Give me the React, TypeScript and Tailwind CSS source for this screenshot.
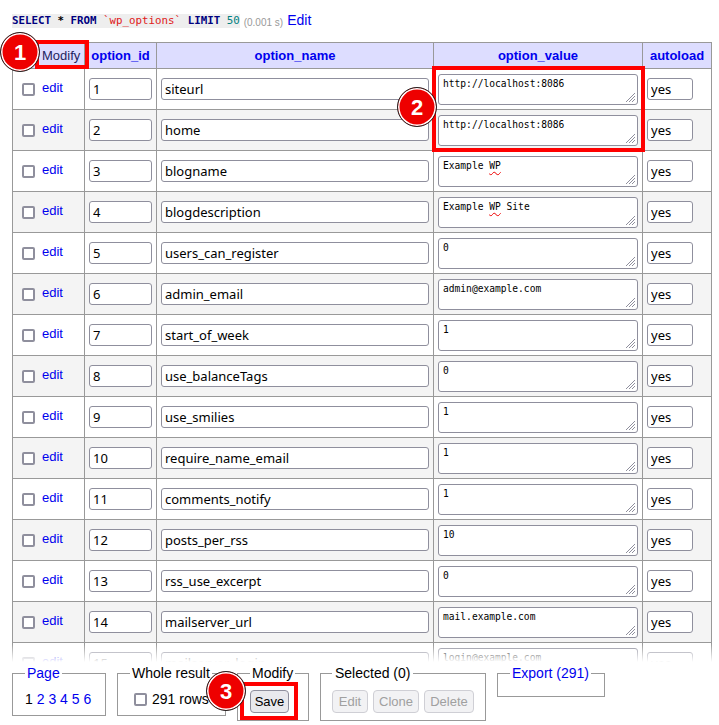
import React from "react";

type Row = { id: number; name: string; value: React.ReactNode };

const wavy = "underline decoration-wavy decoration-[#e00] decoration-1 underline-offset-[2px]";

const rows: Row[] = [
  { id: 1, name: "siteurl", value: "http://localhost:8086" },
  { id: 2, name: "home", value: "http://localhost:8086" },
  { id: 3, name: "blogname", value: <>Example <span className={wavy}>WP</span></> },
  { id: 4, name: "blogdescription", value: <>Example <span className={wavy}>WP</span> Site</> },
  { id: 5, name: "users_can_register", value: "0" },
  { id: 6, name: "admin_email", value: "admin@example.com" },
  { id: 7, name: "start_of_week", value: "1" },
  { id: 8, name: "use_balanceTags", value: "0" },
  { id: 9, name: "use_smilies", value: "1" },
  { id: 10, name: "require_name_email", value: "1" },
  { id: 11, name: "comments_notify", value: "1" },
  { id: 12, name: "posts_per_rss", value: "10" },
  { id: 13, name: "rss_use_excerpt", value: "0" },
  { id: 14, name: "mailserver_url", value: "mail.example.com" },
  { id: 15, name: "mailserver_login", value: "login@example.com" },
];

const cell = "border-r border-b border-[#999] h-[41px] flex items-center";
const field =
  "h-[22px] rounded-[3px] border border-[#8f8f9d] bg-white px-[3px] font-['Noto_Sans',sans-serif] text-[13px] text-black outline-none";

function Checkbox() {
  return <span className="block h-[13px] w-[13px] shrink-0 rounded-[2px] border-2 border-[#8f8f9d] bg-white" />;
}

function Grip() {
  return (
    <svg width="10" height="10" viewBox="0 0 10 10" className="absolute bottom-[2px] right-[2px]">
      <path d="M10 1L1 10M10 4L4 10M10 7L7 10" stroke="#8f8f9d" strokeWidth="1" />
    </svg>
  );
}

function Badge({ n, className }: { n: number; className: string }) {
  return (
    <div
      className={`absolute flex h-[40px] w-[40px] items-center justify-center rounded-full border border-[#222] bg-[#ee0000] text-[22px] font-bold text-white shadow-[inset_0_0_0_1.5px_#fff] ${className}`}
    >
      {n}
    </div>
  );
}

function Btn({ label, w, disabled }: { label: string; w: string; disabled?: boolean }) {
  return (
    <button
      className={`${w} h-[23px] rounded-[4px] border text-[13px] leading-none ${
        disabled ? "border-[#cfcfd5] bg-[#f2f2f4] text-[#a0a0a0]" : "border-[#8f8f9d] bg-[#e9e9ed] text-black"
      }`}
    >
      {label}
    </button>
  );
}

export default function App() {
  return (
    <div className="relative h-[725px] w-[719px] overflow-hidden bg-white font-['Liberation_Sans',Arial,sans-serif] text-[13px] text-black">
      {/* query line */}
      <div className="flex h-[42px] items-start gap-[4px] pl-[12px] pt-[12px]">
        <code className="mt-[2px] bg-[#eee] font-['DejaVu_Sans_Mono',monospace] text-[10.8px] leading-[14px] whitespace-pre">
          <b className="text-[#000080]">SELECT</b> <b>*</b> <b className="text-[#000080]">FROM</b>{" "}
          <span className="text-[#e02020]">`wp_options`</span> <b className="text-[#000080]">LIMIT</b>{" "}
          <span className="text-[#008080]">50</span>
        </code>
        <span className="mt-[5px] text-[10px] leading-[12px] text-[#999]">(0.001 s)</span>
        <a className="text-[14px] leading-[16px] text-[#00e]">Edit</a>
      </div>

      {/* table */}
      <div className="ml-[12px] grid w-[700px] grid-cols-[72px_72px_277px_209px_69px] border-l border-t border-[#999]">
        <div className="flex h-[26px] items-center gap-[7px] border-b border-r border-[#999] bg-[#ddf] pl-[9px]">
          <Checkbox />
          <a className="text-[#1f1f5f]">Modify</a>
        </div>
        {["option_id", "option_name", "option_value", "autoload"].map((h) => (
          <div
            key={h}
            className="flex h-[26px] items-center justify-center border-b border-r border-[#999] bg-[#ddf] font-bold text-[#00e]"
          >
            {h}
          </div>
        ))}

        {rows.map((r) => {
          const bg = r.id % 2 === 0 ? "bg-[#f4f4f4]" : "bg-white";
          return (
            <React.Fragment key={r.id}>
              <div className={`${cell} ${bg} gap-[7px] pl-[9px]`}>
                <Checkbox />
                <a className="-mt-[2px] text-[#00e]">edit</a>
              </div>
              <div className={`${cell} ${bg} pl-[4px]`}>
                <input readOnly defaultValue={r.id} className={`${field} w-[63px]`} />
              </div>
              <div className={`${cell} ${bg} pl-[4px]`}>
                <input readOnly defaultValue={r.name} className={`${field} w-[268px]`} />
              </div>
              <div className={`${cell} ${bg} pl-[4px]`}>
                <div className="relative h-[31px] w-[200px] rounded-[3px] border border-[#8f8f9d] bg-white px-[4px] pt-[3px] font-['DejaVu_Sans_Mono',monospace] text-[9.6px] leading-[12px] text-black">
                  {r.value}
                  <Grip />
                </div>
              </div>
              <div className={`${cell} ${bg} pl-[4px]`}>
                <input readOnly defaultValue="yes" className={`${field} w-[46px]`} />
              </div>
            </React.Fragment>
          );
        })}
      </div>

      {/* sticky footer */}
      <div className="absolute bottom-0 left-0 right-0 flex h-[83px] flex-col text-[14px]">
        <div className="h-[20px] bg-linear-to-b from-transparent from-10% to-white" />
        <div className="flex flex-1 items-start gap-[11px] bg-white pl-[12px] pt-[3px]">
          <fieldset className="w-[94px] border border-[#999] px-[12px] pb-[8px]">
            <legend className="px-[2px] leading-[16px] text-[#00e]">Page</legend>
            <div className="pt-[10px] leading-[16px]">
              1 <a className="text-[#00e]">2</a> <a className="text-[#00e]">3</a> <a className="text-[#00e]">4</a>{" "}
              <a className="text-[#00e]">5</a> <a className="text-[#00e]">6</a>
            </div>
          </fieldset>
          <fieldset className="w-[109px] border border-[#999] px-[12px] pb-[8px]">
            <legend className="px-[2px] leading-[16px]">Whole result</legend>
            <div className="flex items-center gap-[5px] whitespace-nowrap pl-[4px] pt-[10px] leading-[16px]">
              <Checkbox />
              291 rows
            </div>
          </fieldset>
          <fieldset className="w-[72px] border border-[#999] px-[12px] pb-[7px]">
            <legend className="px-[2px] leading-[16px]">Modify</legend>
            <div className="pt-[9px]">
              <Btn label="Save" w="w-[39px]" />
            </div>
          </fieldset>
          <fieldset className="w-[166px] border border-[#999] px-[11px] pb-[7px]">
            <legend className="px-[3px] leading-[16px]">Selected (0)</legend>
            <div className="flex gap-[5px] pt-[9px]">
              <Btn label="Edit" w="w-[36px]" disabled />
              <Btn label="Clone" w="w-[46px]" disabled />
              <Btn label="Delete" w="w-[50px]" disabled />
            </div>
          </fieldset>
          <fieldset className="w-[108px] border border-[#999] px-[12px] pb-[8px]">
            <legend className="px-[2px] leading-[16px] text-[#00e]">Export (291)</legend>
            <div className="h-[7px]" />
          </fieldset>
        </div>
      </div>

      {/* annotations */}
      <div className="absolute left-[35px] top-[40px] h-[29px] w-[54px] border-4 border-[#f00]" />
      <div className="absolute left-[432px] top-[66px] h-[86px] w-[213px] border-4 border-[#f00]" />
      <div className="absolute left-[240px] top-[682px] h-[38px] w-[58px] border-4 border-[#f00]" />
      <Badge n={1} className="left-[0px] top-[32px]" />
      <Badge n={2} className="left-[397px] top-[87px]" />
      <Badge n={3} className="left-[206px] top-[671px]" />
    </div>
  );
}
